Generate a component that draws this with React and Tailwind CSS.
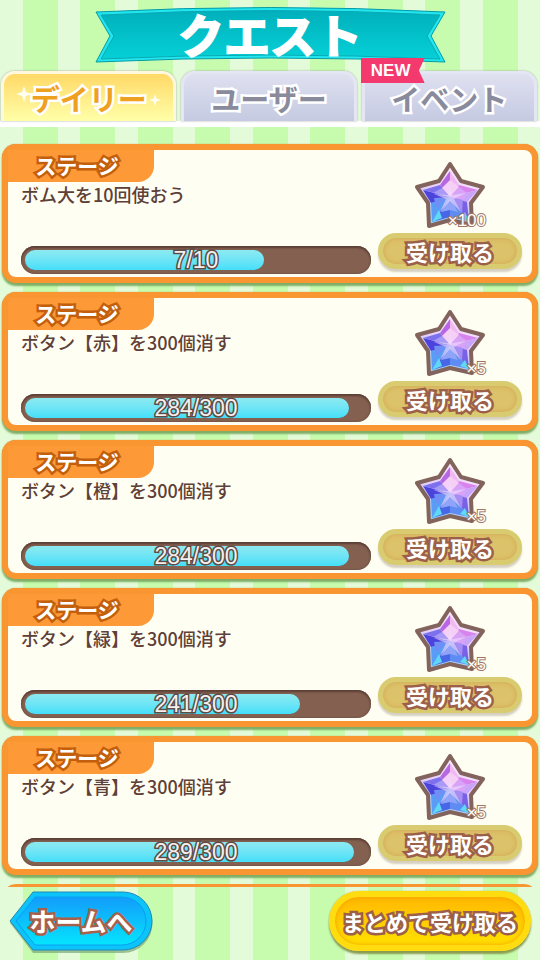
import { useState } from 'react';

const tabs = [
  { id: 'daily', label: 'デイリー' },
  { id: 'user', label: 'ユーザー' },
  { id: 'event', label: 'イベント', isNew: true }
];

const quests = [
  { id: 1, text: 'ボム大を10回使おう', current: 7, goal: 10, reward: 100 },
  { id: 2, text: 'ボタン【赤】を300個消す', current: 284, goal: 300, reward: 5 },
  { id: 3, text: 'ボタン【橙】を300個消す', current: 284, goal: 300, reward: 5 },
  { id: 4, text: 'ボタン【緑】を300個消す', current: 241, goal: 300, reward: 5 },
  { id: 5, text: 'ボタン【青】を300個消す', current: 289, goal: 300, reward: 5 }
];

const StarGem = () => (
  <svg viewBox="0 0 72 70" className="block w-[72px] h-[70px]" aria-hidden="true">
    <defs>
      <linearGradient id="gemEdge" x1="0.7" y1="0" x2="0.3" y2="1">
        <stop offset="0" stopColor="#fff0fd" />
        <stop offset="0.5" stopColor="#e6cdfb" />
        <stop offset="1" stopColor="#8ed4f6" />
      </linearGradient>
    </defs>
    <path
      d="M36 4 L47 21 L69 27 L57 43 L58 65 L36 60 L15 66 L14 43 L3 27 L25 21 Z"
      fill="url(#gemEdge)"
      stroke="#82645c"
      strokeWidth="4"
      strokeLinejoin="round"
    />
    {/* outer facets */}
    <path d="M36 11 L36 37 L26 25 Z" fill="#b766e4" />
    <path d="M36 11 L45 25 L36 37 Z" fill="#f1b9f0" />
    <path d="M45 25 L64 30 L36 37 Z" fill="#d884ec" />
    <path d="M64 30 L53 42 L36 37 Z" fill="#c9a4f8" />
    <path d="M53 42 L55 61 L36 37 Z" fill="#7a60e4" />
    <path d="M55 61 L36 57 L36 37 Z" fill="#5f8cf2" />
    <path d="M36 57 L18 62 L36 37 Z" fill="#4867e6" />
    <path d="M18 62 L17 43 L36 37 Z" fill="#5a9df6" />
    <path d="M17 43 L9 30 L36 37 Z" fill="#4c42dc" />
    <path d="M9 30 L26 25 L36 37 Z" fill="#7d70ec" />
    {/* inner facets */}
    <path d="M36 20 L45 27 L36 37 L28 28 Z" fill="#f6cff6" />
    <path d="M45 27 L53 33 L49 40 L36 37 Z" fill="#d7a3f6" />
    <path d="M49 40 L48 52 L36 37 Z" fill="#a48df4" />
    <path d="M36 37 L44 52 L36 50 L27 52 Z" fill="#8fa4f8" />
    <path d="M36 37 L22 48 L20 38 Z" fill="#6f8ef6" />
    <path d="M36 37 L19 33 L28 28 Z" fill="#a79bf6" />
    <path d="M18 62 L28 58 L25 50 Z M46 58 L55 61 L51 52 Z" fill="#5fd8f6" />
    <path d="M36 22 L38 35 L52 33 L40 39 L47 52 L36 41 L26 52 L32 39 L20 34 L34 35 Z" fill="#efdcfe" opacity="0.6" />
  </svg>
);

const Sparkle = ({ className }) => (
  <svg viewBox="0 0 16 16" className={className} aria-hidden="true">
    <path d="M8 0 L10 6 L16 8 L10 10 L8 16 L6 10 L0 8 L6 6 Z" fill="#fffdf0" />
  </svg>
);

const Title = () => (
  <div className="relative mx-auto mt-[7px] h-14 w-[65%] flex items-center justify-center">
    <svg viewBox="0 0 352 56" preserveAspectRatio="none" className="absolute inset-0 w-full h-full" aria-hidden="true">
      <defs>
        <linearGradient id="ribbon" x1="0" y1="0" x2="0" y2="1">
          <stop offset="0" stopColor="#00b0bc" />
          <stop offset="1" stopColor="#05d0d6" />
        </linearGradient>
      </defs>
      <path d="M1 5 Q176 -4 351 5 L337 29 L351 55 Q176 47 1 55 L15 29 Z" fill="#22e6ee" stroke="#079aa5" strokeWidth="1" />
      <path d="M6 8 Q176 -1 346 8 L333 29 L346 52 Q176 44 6 52 L19 29 Z" fill="url(#ribbon)" stroke="#0aa9b4" strokeWidth="1" />
    </svg>
    <h1 className="relative pb-1 text-[46px] leading-[52px] font-bold text-white [stroke-linejoin:round] [-webkit-text-stroke:2px_#fff]">
      クエスト
    </h1>
  </div>
);

const Tab = ({ tab, active, onSelect }) => (
  <button
    type="button"
    role="tab"
    aria-selected={active}
    onClick={() => onSelect(tab.id)}
    className={`relative flex-1 h-[50px] rounded-t-[14px] border-t-[3px] border-x-[3px] shadow-[0_0_2px_#999] ${
      active
        ? 'border-[#fff8dc] bg-linear-to-b from-[#ffd965] to-[#ffffa8]'
        : 'border-[#e4e7f3] bg-linear-to-b from-[#dfe1f0] to-[#c5cae2]'
    }`}
  >
    {active && <Sparkle className="absolute left-3 top-3 size-4" />}
    {active && <Sparkle className="absolute right-3 top-5 size-3" />}
    <span
      className={`relative text-[29px] leading-[44px] font-bold whitespace-nowrap [paint-order:stroke_fill] [stroke-linejoin:round] [-webkit-text-stroke:5px_#fff] ${
        active ? 'text-[#eea01e]' : 'text-[#898b9c]'
      }`}
    >
      {tab.label}
    </span>
    {tab.isNew && (
      <span className="absolute -left-1 -top-4 h-[25px] w-16 pr-1 bg-[#f3396d] text-white text-[17px] leading-[25px] font-bold font-['Liberation_Sans',sans-serif] [clip-path:polygon(0_0,100%_0,91%_50%,100%_100%,0_100%)]">
        NEW
      </span>
    )}
  </button>
);

const QuestCard = ({ quest }) => (
  <li className="flex justify-between rounded-[14px] border-[6px] border-[#fa9632] bg-[#fffef3] shadow-[0_3px_2px_#7fae67,0_0_1px_#c66c12]">
    <div className="flex-1 min-w-0">
      <h2 className="h-8 w-[146px] pr-2 rounded-br-2xl bg-[#fd9937] text-center text-[21px] leading-[30px] font-bold text-white [paint-order:stroke_fill] [stroke-linejoin:round] [-webkit-text-stroke:5px_#c35f0c]">
        ステージ
      </h2>
      <p className="pl-[13px] text-[18px] leading-[24px] font-medium text-[#5d4037]">{quest.text}</p>
      <div
        role="progressbar"
        aria-label={quest.text}
        aria-valuenow={quest.current}
        aria-valuemax={quest.goal}
        className="relative mt-10 mb-[3px] ml-[13px] h-7 p-1 rounded-full bg-[#83604f] shadow-[inset_0_2px_2px_#5d4037,inset_0_0_2px_#5d4037]"
      >
        <div
          className="h-full rounded-full bg-linear-to-b from-[#8ceaf0] to-[#43dffa]"
          style={{ width: `${(quest.current / quest.goal) * 100}%` }}
        />
        <span className="absolute inset-0 text-center text-[23px] leading-[28px] text-[#f4f0ee] font-['Liberation_Sans',sans-serif] [paint-order:stroke_fill] [-webkit-text-stroke:3px_#5d4a45]">
          {quest.current}/{quest.goal}
        </span>
      </div>
    </div>
    <div className="w-36 ml-[7px] mr-[10px] pt-[10px]">
      <div className="relative mx-auto w-[72px]">
        <StarGem />
        <span className="absolute right-0 bottom-0 text-[17px] leading-[18px] text-white font-['Liberation_Sans',sans-serif] [paint-order:stroke_fill] [-webkit-text-stroke:2px_#a07464]">
          ×{quest.reward}
        </span>
      </div>
      <button
        type="button"
        className="mt-[3px] block w-full h-9 rounded-full border-[5px] border-[#d9cc70] bg-[#dcc26a] shadow-[0_3px_2px_#d5d0c0,inset_0_0_5px_#d3a352] text-[22px] leading-[26px] font-bold text-white [paint-order:stroke_fill] [stroke-linejoin:round] [-webkit-text-stroke:5px_#9c5f49]"
      >
        受け取る
      </button>
    </div>
  </li>
);

const App = () => {
  const [activeTab, setActiveTab] = useState('daily');

  return (
    <div className="h-screen flex flex-col overflow-hidden font-['Noto_Sans_CJK_JP',sans-serif] bg-[repeating-linear-gradient(90deg,#e3fbd9_0_23px,#c7fcae_23px_58px,#e3fbd9_58px_80px,#c7fcae_80px_115px)]">
      <header>
        <Title />
        <div role="tablist" className="mt-2 pl-[1px] pr-[3px] flex gap-[5px] border-b-[6px] border-white">
          {tabs.map((tab) => (
            <Tab key={tab.id} tab={tab} active={tab.id === activeTab} onSelect={setActiveTab} />
          ))}
        </div>
      </header>

      <main className="flex-1 min-h-0 overflow-y-auto [scrollbar-width:none] px-[2px] pt-[17px]">
        <ul className="flex flex-col gap-[9px]">
          {quests.map((quest) => (
            <QuestCard key={quest.id} quest={quest} />
          ))}
          <li className="h-6 rounded-t-[14px] border-t-[6px] border-[#fa9632]" aria-hidden="true" />
        </ul>
      </main>

      <footer className="flex justify-between px-[9px] pt-1 pb-[9px]">
        <button type="button" className="relative w-36 h-[60px]">
          <svg viewBox="0 0 144 62" className="absolute left-0 top-0 w-36 h-[62px]" aria-hidden="true">
            <defs>
              <linearGradient id="homeFill" x1="0" y1="0" x2="0" y2="1">
                <stop offset="0" stopColor="#129cfb" />
                <stop offset="1" stopColor="#05e4fd" />
              </linearGradient>
            </defs>
            <path d="M24 3 H114 A29 29 0 0 1 114 62 H24 L1 32 Z" fill="#77a877" opacity="0.7" />
            <path d="M24 1 H114 A29 29 0 0 1 114 59 H24 L1 30 Z" fill="#0bc4fa" stroke="#2388b8" strokeWidth="1" strokeLinejoin="round" />
            <path d="M26 6 H113 A24 24 0 0 1 113 54 H26 L7 30 Z" fill="url(#homeFill)" stroke="#0a9ef0" strokeWidth="1" strokeLinejoin="round" />
          </svg>
          <span className="relative text-[26px] leading-[60px] font-bold text-white [paint-order:stroke_fill] [stroke-linejoin:round] [-webkit-text-stroke:5px_#a8604a]">
            ホームへ
          </span>
        </button>
        <button
          type="button"
          className="w-[202px] h-[60px] rounded-full border-[6px] border-[#ffdc10] bg-linear-to-b from-[#ffb800] to-[#ffe100] shadow-[0_3px_2px_#8a9c50,0_0_1px_#a87c00,inset_0_0_5px_#f29b00] text-[22px] leading-[48px] font-bold text-white whitespace-nowrap [paint-order:stroke_fill] [stroke-linejoin:round] [-webkit-text-stroke:5px_#9c5f49]"
        >
          まとめて受け取る
        </button>
      </footer>
    </div>
  );
};

export default App;
